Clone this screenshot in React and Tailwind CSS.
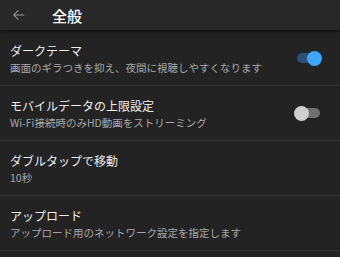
import React from 'react';

const Toggle = ({ on }) => (
  <div className="relative w-[26px] h-[16px] flex items-center">
    <div
      className={`absolute left-[3px] right-0 h-[10px] rounded-full ${
        on ? 'bg-[#2b5275]' : 'bg-[#6f6f6f]'
      }`}
    />
    <div
      className={`absolute w-[15px] h-[15px] rounded-full ${
        on ? 'right-[-2px] bg-[#3ea6ff]' : 'left-0 bg-[#cfcfcf]'
      }`}
    />
  </div>
);

const rows = [
  { title: 'ダークテーマ', sub: '画面のギラつきを抑え、夜間に視聴しやすくなります', toggle: 'on' },
  { title: 'モバイルデータの上限設定', sub: 'Wi-Fi接続時のみHD動画をストリーミング', toggle: 'off' },
  { title: 'ダブルタップで移動', sub: '10秒' },
  { title: 'アップロード', sub: 'アップロード用のネットワーク設定を指定します' },
];

export default function App() {
  return (
    <div
      className="w-[340px] h-[257px] bg-[#232323] overflow-hidden"
      style={{ fontFamily: '"Noto Sans CJK JP", "Noto Sans", sans-serif' }}
    >
      <div className="h-[30px] bg-[#282828] flex items-center shadow-[0_2px_3px_rgba(0,0,0,0.5)] relative z-10">
        <svg
          width="14"
          height="14"
          viewBox="0 0 24 24"
          fill="none"
          stroke="currentColor"
          strokeWidth="1.8"
          className="ml-[12px] text-[#9a9a9a]"
        >
          <path d="M21 12H3M11 4l-8 8 8 8" />
        </svg>
        <span className="ml-[26px] text-[15px] font-medium text-white leading-none">全般</span>
      </div>
      <div className="pt-[1px]">
        {rows.map((r) => (
          <div
            key={r.title}
            className="h-[55px] border-b border-[#343434] flex items-center pl-[10px] pr-[20px]"
          >
            <div className="flex-1 pt-[1px]">
              <div className="text-[12px] leading-[18px] text-[#eeeeee]">{r.title}</div>
              <div className="text-[10.5px] leading-[16px] text-[#a8a8a8]">{r.sub}</div>
            </div>
            {r.toggle && <Toggle on={r.toggle === 'on'} />}
          </div>
        ))}
      </div>
    </div>
  );
}
